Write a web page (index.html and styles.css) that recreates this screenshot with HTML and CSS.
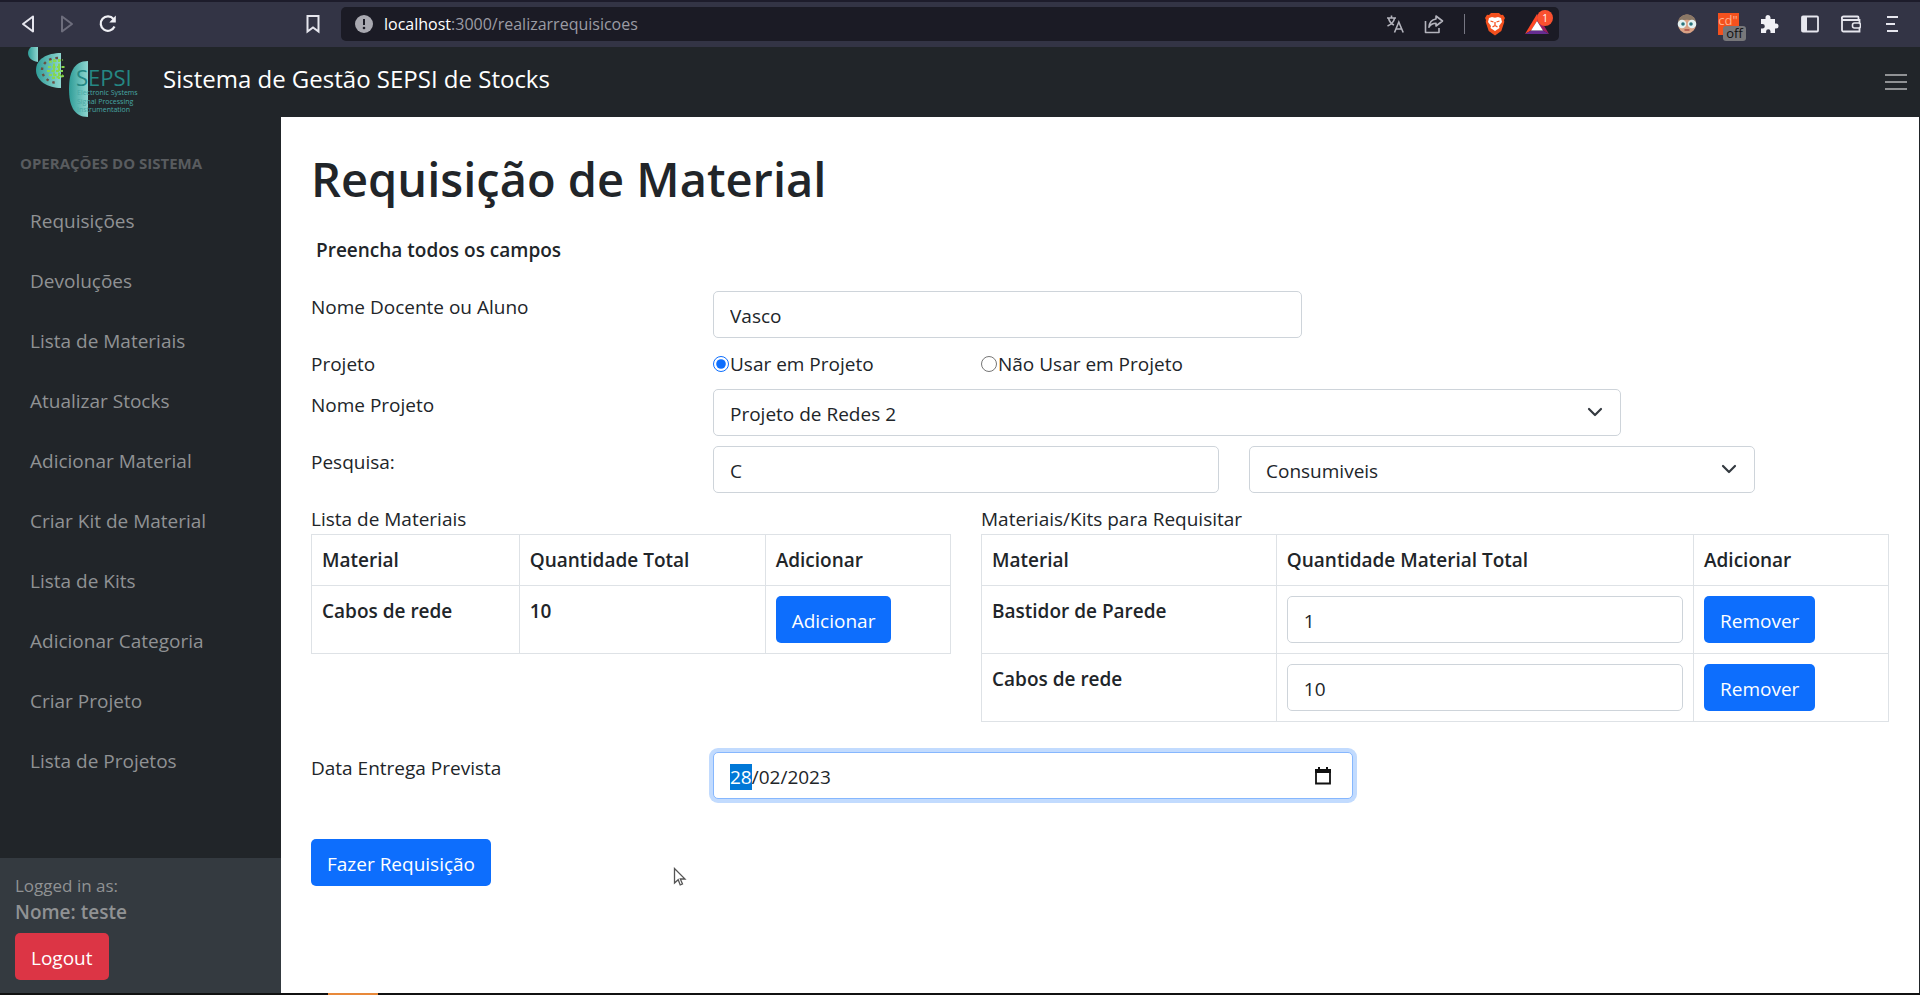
FILE: index.html
```html
<!DOCTYPE html>
<html lang="pt">
<head>
<meta charset="utf-8">
<title>Sistema de Gestão SEPSI de Stocks</title>
<link rel="stylesheet" href="styles.css">
</head>
<body>
<div class="window">
  <header class="browser">
    <nav class="browser-nav" aria-label="Navegador">
      <button class="icon-btn" aria-label="Voltar"><svg width="16" height="20" viewBox="0 0 16 20"><path d="M13 2.5 3 10l10 7.500z" fill="none" stroke="#e6e6ee" stroke-width="2" stroke-linejoin="round"/></svg></button>
      <button class="icon-btn" aria-label="Avançar"><svg width="16" height="20" viewBox="0 0 16 20"><path d="M3 2.500 13 10 3 17.500z" fill="none" stroke="#6d6d7c" stroke-width="2" stroke-linejoin="round"/></svg></button>
      <button class="icon-btn" aria-label="Recarregar"><svg width="20" height="20" viewBox="0 0 20 20"><path d="M16.500 12.500a7.200 7.200 0 1 1-1-7.500" fill="none" stroke="#f0f0f5" stroke-width="2.200"/><path d="M17.800 1.500v7h-6.500z" fill="#f0f0f5"/></svg></button>
    </nav>
    <button class="icon-btn bookmark" aria-label="Favorito"><svg width="16" height="20" viewBox="0 0 16 20"><path d="M2.500 2h11v15.500L8 13.500l-5.500 4z" fill="none" stroke="#e6e6ee" stroke-width="2"/></svg></button>
    <div class="address">
      <svg width="18" height="18" viewBox="0 0 18 18"><circle cx="9" cy="9" r="9" fill="#a9a9b1"/><path d="M9 4v6" stroke="#1b1b25" stroke-width="2"/><circle cx="9" cy="13" r="1.300" fill="#1b1b25"/></svg>
      <span class="url"><b>localhost</b>:3000/realizarrequisicoes</span>
      <svg class="push" width="18" height="20" viewBox="0 0 18 20"><g fill="none" stroke="#b4b4bd" stroke-width="1.600"><path d="M1 4h9M5.500 1.500V4M8.500 4C8 8 5 10.500 1.500 12M2.500 4c.8 3.500 3 6 5.500 7"/><path d="M8.500 18.500 12.800 8l4.400 10.500M10 15h5.600"/></g></svg>
      <svg width="20" height="20" viewBox="0 0 20 20"><g fill="none" stroke="#b4b4bd" stroke-width="1.600" stroke-linejoin="round"><path d="M1.500 7v11.500H15V14"/><path d="M12 2l6.500 5L12 12V9.200c-3.500 0-5.500 1-7 4 .3-4.500 2.500-7.500 7-8.200z"/></g></svg>
      <span class="divider"></span>
      <svg width="20" height="24" viewBox="0 0 20 24"><path d="M6 1h8l2 2 2-.2L20 6l-1 2 .3 2-3 9L10 23.500 3.700 19l-3-9L1 8 0 6l2-3.200L4 3z" fill="#f4501e"/><path d="M4 6l3-1 3 .7L13 5l3 1 1 4-3 4 .5 2L10 19l-4.500-3L6 14l-3-4z" fill="#fff"/><path d="M5.500 9l3 1M14.500 9l-3 1M10 10v4M7.500 15l2.500-1.500 2.500 1.500" stroke="#f4501e" stroke-width="1.300" fill="none"/></svg>
      <span class="bat"><svg width="24" height="22" viewBox="0 0 24 22"><path d="M12 1 0 21l6-3.500L12 8z" fill="#ff4724"/><path d="M12 1l12 20-6-3.500L12 8z" fill="#9e1f63"/><path d="M0 21h24l-6-3.500H6z" fill="#662d91"/><path d="M12 8l6 9.500H6z" fill="#fff"/></svg><span class="badge">1</span></span>
    </div>
    <div class="extensions">
      <button class="icon-btn" aria-label="Extensão"><svg width="20" height="20" viewBox="0 0 20 20"><ellipse cx="10" cy="10" rx="9" ry="9.500" fill="#d9a184"/><path d="M1 8C1.500 3 6 .5 10 .5S18.500 3 19 8c-4-3-14-3-18 0z" fill="#8b7866"/><circle cx="5" cy="10" r="4.300" fill="#e3f1f1"/><circle cx="15" cy="10" r="4.300" fill="#e3f1f1"/><circle cx="6" cy="10" r="1.800" fill="#28737b"/><circle cx="14" cy="10" r="1.800" fill="#28737b"/><path d="M7.500 16h5" stroke="#a84d45" stroke-width="1.500"/></svg></button>
      <button class="icon-btn cd" aria-label="Extensão cd"><span class="cd-tile">cd"</span><span class="off">off</span></button>
      <button class="icon-btn" aria-label="Extensões"><svg width="20" height="20" viewBox="0 0 20 20"><path d="M2 5h4.500V3.500a2.500 2.500 0 0 1 5 0V5H16v4.500h1a2.500 2.500 0 0 1 0 5h-1V19h-4.500v-1.500a2.200 2.200 0 0 0-4.400 0V19H2v-4.500h1.500a2.300 2.300 0 0 0 0-4.600H2z" fill="#f0f0f5"/></svg></button>
      <button class="icon-btn" aria-label="Barra lateral"><svg width="18" height="18" viewBox="0 0 18 18"><rect x="1" y="1.500" width="16" height="15" rx="1" fill="none" stroke="#e6e6ee" stroke-width="1.800"/><path d="M1 1.500h5v15H1z" fill="#e6e6ee"/></svg></button>
      <button class="icon-btn" aria-label="Carteira"><svg width="20" height="18" viewBox="0 0 20 18"><path d="M17.500 5V2.500a1 1 0 0 0-1-1H2.500a1.500 1.500 0 0 0 0 3.500h16v11.500h-16a1.500 1.500 0 0 1-1.500-1.500V3" fill="none" stroke="#e6e6ee" stroke-width="1.800"/><rect x="11.500" y="8" width="8" height="5" rx="2" fill="#333445" stroke="#e6e6ee" stroke-width="1.600"/></svg></button>
      <button class="icon-btn" aria-label="Menu"><svg width="14" height="18" viewBox="0 0 14 18"><path d="M2 2h11M1 9h9M2 16h11" stroke="#e6e6ee" stroke-width="2"/></svg></button>
    </div>
  </header>

  <header class="topbar">
    <a class="brand" href="#" aria-label="SEPSI">
      <svg width="118" height="71" viewBox="0 0 118 71"><defs><linearGradient id="teal" x1="0" x2="1"><stop offset="0" stop-color="#2f9d98"/><stop offset="1" stop-color="#8fd6d0"/></linearGradient></defs>
        <path d="M11 0v15C4 14 1 10 1 6c0-2 1-4 3-6z" fill="url(#teal)"/>
        <path d="M34 6v35C21 41 9 34 9 23S20 6 34 6z" fill="url(#teal)"/>
        <path d="M32 11c-10 0-16 6-16 12s6 13 16 13" transform="translate(-1)" fill="none" stroke="#6b4f42" stroke-width="2.400" stroke-dasharray="2.500 4"/>
        <path d="M22 15l14-2M21 20h17M20 24h16M22 28h14M25 31l12-2M27 12v20M32 12v20" stroke="#86d84c" stroke-width="2" stroke-dasharray="3 1.500"/>
        <path d="M47 14v56C32 70 28 57 28 42s4-28 19-28z" transform="translate(0)" fill="url(#teal)" class="half"/>
        <text x="35" y="39" class="logo-name">SEPSI</text>
        <g class="logo-sub"><text x="36" y="48">Electronic Systems</text><text x="36" y="57">Signal Processing</text><text x="36" y="65">Instrumentation</text></g></svg>
    </a>
    <span class="app-title">Sistema de Gestão SEPSI de Stocks</span>
    <button class="icon-btn burger" aria-label="Abrir menu"><svg width="22" height="18" viewBox="0 0 22 18"><path d="M0 2h22M0 9h22M0 16h22" stroke="#909294" stroke-width="2"/></svg></button>
  </header>

  <div class="body">
    <aside class="sidebar">
      <nav class="menu">
        <h2>Operações do Sistema</h2>
        <a href="#">Requisições</a>
        <a href="#">Devoluções</a>
        <a href="#">Lista de Materiais</a>
        <a href="#">Atualizar Stocks</a>
        <a href="#">Adicionar Material</a>
        <a href="#">Criar Kit de Material</a>
        <a href="#">Lista de Kits</a>
        <a href="#">Adicionar Categoria</a>
        <a href="#">Criar Projeto</a>
        <a href="#">Lista de Projetos</a>
      </nav>
      <div class="session">
        <span class="small">Logged in as:</span>
        <strong>Nome: teste</strong>
        <button class="btn danger">Logout</button>
      </div>
    </aside>

    <main class="content">
      <h1>Requisição de Material</h1>
      <p class="hint">Preencha todos os campos</p>
      <form class="form">
        <label class="c3" for="nome">Nome Docente ou Aluno</label>
        <div class="c5"><input class="control name" id="nome" type="text" value="Vasco"></div>

        <span class="c3">Projeto</span>
        <label class="c2 radio"><input type="radio" name="uso" checked>Usar em Projeto</label>
        <label class="c7 radio"><input type="radio" name="uso">Não Usar em Projeto</label>

        <label class="c3" for="projeto">Nome Projeto</label>
        <div class="c7 select"><select class="control" id="projeto"><option>Projeto de Redes 2</option></select><svg class="chevron" width="16" height="10" viewBox="0 0 16 10"><path d="M2 2l6 6 6-6" fill="none" stroke="#343a40" stroke-width="2.200" stroke-linecap="round" stroke-linejoin="round"/></svg></div>

        <label class="c3" for="pesquisa">Pesquisa:</label>
        <div class="c4"><input class="control" id="pesquisa" type="text" value="C"></div>
        <div class="c4 select"><select class="control" aria-label="Categoria"><option>Consumiveis</option></select><svg class="chevron" width="16" height="10" viewBox="0 0 16 10"><path d="M2 2l6 6 6-6" fill="none" stroke="#343a40" stroke-width="2.200" stroke-linecap="round" stroke-linejoin="round"/></svg></div>

        <section class="first">
          <table class="stock">
            <caption>Lista de Materiais</caption>
            <thead><tr><th class="w-a">Material</th><th class="w-b">Quantidade Total</th><th>Adicionar</th></tr></thead>
            <tbody><tr><th>Cabos de rede</th><th>10</th><td><button type="button" class="btn primary">Adicionar</button></td></tr></tbody>
          </table>
        </section>
        <section class="c7">
          <table class="stock">
            <caption>Materiais/Kits para Requisitar</caption>
            <thead><tr><th class="w-a">Material</th><th class="w-d">Quantidade Material Total</th><th>Adicionar</th></tr></thead>
            <tbody>
              <tr><th>Bastidor de Parede</th><td><input class="control" type="text" value="1" aria-label="Quantidade de Bastidor de Parede"></td><td><button type="button" class="btn primary">Remover</button></td></tr>
              <tr><th>Cabos de rede</th><td><input class="control" type="text" value="10" aria-label="Quantidade de Cabos de rede"></td><td><button type="button" class="btn primary">Remover</button></td></tr>
            </tbody>
          </table>
        </section>

        <label class="c3 later" for="data">Data Entrega Prevista</label>
        <div class="c5 later select"><input class="control focused" id="data" type="text" value="28/02/2023"><button type="button" class="picker" aria-label="Abrir calendário"><svg width="18" height="18" viewBox="0 0 18 18"><path d="M2 4h14v12.500H2z" fill="none" stroke="#111" stroke-width="1.800"/><path d="M1 2h16v4H1zM4 0h2v3H4zM12 0h2v3h-2z" fill="#111"/></svg></button></div>
        <div class="submit"><button type="button" class="btn primary">Fazer Requisição</button></div>
      </form>
    </main>
  </div>
  <div class="taskbar"></div>
  <svg class="cursor" width="14" height="20" viewBox="0 0 14 20"><path d="M1.500 1.500v14.500l3.700-3.300L7.200 18l2.300-1-2.200-5H12z" fill="#fff" stroke="#555" stroke-width="1.300"/></svg>
</div>
<script src="main.js"></script>
</body>
</html>
```

FILE: styles.css
```css
* { box-sizing: border-box; }
body {
  margin: 0;
  font: 19px/30px "Open Sans", "Noto Sans", sans-serif;
  color: #212529;
  background: #fff;
}
button, input, select { font: inherit; color: inherit; margin: 0; }
button { cursor: pointer; }
.window { position: relative; display: flex; flex-direction: column; min-height: 100vh; }

.browser {
  display: flex;
  align-items: center;
  height: 47px;
  padding: 0 18px 2px 20px;
  background: #333445;
  border-top: 2px solid #1d1c2b;
}
.icon-btn { display: flex; padding: 0; border: 0; background: none; }
.browser-nav { display: flex; align-items: center; gap: 23px; }
.bookmark { margin-left: 187px; }
.address {
  display: flex;
  flex: 1;
  align-items: center;
  gap: 20px;
  height: 34px;
  margin-left: 20px;
  padding: 0 10px 0 14px;
  background: #1b1b25;
  border-radius: 5px;
}
.url { margin-left: -9px; font-size: 16px; color: #9b9ba4; }
.url b { font-weight: 400; color: #fff; }
.push { margin-left: auto; }
.divider { width: 1px; height: 20px; background: #777783; }
.bat { position: relative; display: flex; }
.badge {
  position: absolute;
  top: -3px;
  right: -4px;
  width: 16px;
  height: 16px;
  border-radius: 50%;
  background: #f9502f;
  color: #fff;
  font-size: 10px;
  line-height: 16px;
  text-align: center;
}
.extensions { display: flex; align-items: center; gap: 21px; margin-left: 118px; }
.extensions .icon-btn { width: 20px; justify-content: center; }
.cd { position: relative; }
.cd-tile { flex: none; width: 21px; height: 22px; background: #f4511e; color: #ffb08f; font-size: 13px; line-height: 14px; }
.off {
  position: absolute;
  left: 5px;
  top: 13px;
  width: 23px;
  height: 15px;
  border-radius: 3px;
  background: #77777a;
  color: #111;
  font-size: 13px;
  line-height: 15px;
}

.topbar {
  display: flex;
  align-items: center;
  height: 70px;
  padding: 0 13px 0 27px;
  background: #212529;
  color: #fff;
}
.brand { display: flex; }
.half, .logo-name, .logo-sub { transform: translateX(14px); }
.logo-name { font: 22px "Open Sans", sans-serif; fill: #258783; }
.logo-sub { font: 7px "Open Sans", sans-serif; fill: #48a8a4; }
.app-title { margin-left: 18px; padding-bottom: 6px; font-size: 24px; }
.burger { margin-left: auto; }

.body { display: flex; flex: 1; }
.sidebar {
  display: flex;
  flex-direction: column;
  width: 281px;
  background: #212529;
  color: #909294;
}
.menu { display: flex; flex: 1; flex-direction: column; }
.menu h2 {
  margin: 0;
  padding: 31px 20px 13px;
  font-size: 15px;
  line-height: 30px;
  text-transform: uppercase;
  color: #595c5f;
}
.menu a { padding: 15px 30px; color: inherit; text-decoration: none; }
.session {
  display: flex;
  flex-direction: column;
  align-items: flex-start;
  padding: 15px 15px 13px;
  background: #343a40;
  line-height: 26px;
}
.small { font-size: 17px; }
.session strong { font-weight: 600; }

.btn {
  height: 47px;
  padding: 2px 16px 0;
  border: 0;
  border-radius: 5px;
  color: #fff;
  line-height: 30px;
}
.primary { background: #0d6efd; }
.danger { margin-top: 8px; background: #dc3545; }

.content { flex: 1; padding: 32px 30px 0; border-right: 1px solid #212529; }
h1 { margin: 0; font-size: 47px; line-height: 60px; font-weight: 600; }
.hint { margin: 26px 5px; font-weight: 600; }
.form {
  display: grid;
  grid-template-columns: repeat(12, minmax(0, 1fr));
  gap: 10px 30px;
  align-items: start;
}
.c2 { grid-column: span 2; }
.c3 { grid-column: 1 / span 3; }
.c4 { grid-column: span 4; }
.c5 { grid-column: span 5; }
.c7 { grid-column: span 7; }
.first { grid-column: 1 / span 5; }
.control {
  display: block;
  width: 100%;
  height: 47px;
  padding: 2px 16px 0;
  border: 1px solid #ced4da;
  border-radius: 5px;
  background: #fff;
  appearance: none;
}
.name { width: 92%; }
.radio { display: flex; align-items: center; white-space: nowrap; }
.radio input { width: 16px; height: 16px; margin-right: 1px; accent-color: #0d6efd; }
.select { position: relative; }
.chevron { position: absolute; right: 18px; top: 18px; pointer-events: none; }

.form > label, .form > span, .stock caption { padding-top: 1px; }
.stock { width: 100%; border-collapse: collapse; table-layout: fixed; }
.stock caption { text-align: left; }
.stock th, .stock td {
  padding: 10px;
  border: 1px solid #dee2e6;
  text-align: left;
  vertical-align: top;
  font-weight: 600;
}
.stock td { font-weight: 400; }
.stock .btn { display: block; }
.w-a { width: 32.5%; }
.w-b { width: 38.5%; }
.w-d { width: 46%; }

.later { margin-top: 20px; }
.focused, .focused:focus { outline: 0; border-color: #86b7fe; box-shadow: 0 0 0 4px #c2dbfe; }
.focused::selection { background: #0078d7; color: #fff; }
.picker { position: absolute; right: 21px; top: 15px; display: flex; padding: 0; border: 0; background: none; }
.submit { grid-column: 1 / -1; margin-top: 30px; }

.taskbar { height: 2px; background: linear-gradient(90deg, #111 328px, #e8893a 328px 378px, #111 378px); }
.cursor { position: absolute; left: 673px; top: 867px; }
```

FILE: main.js
```js
const date = document.getElementById("data");
date.focus();
date.setSelectionRange(0, 2);
```
